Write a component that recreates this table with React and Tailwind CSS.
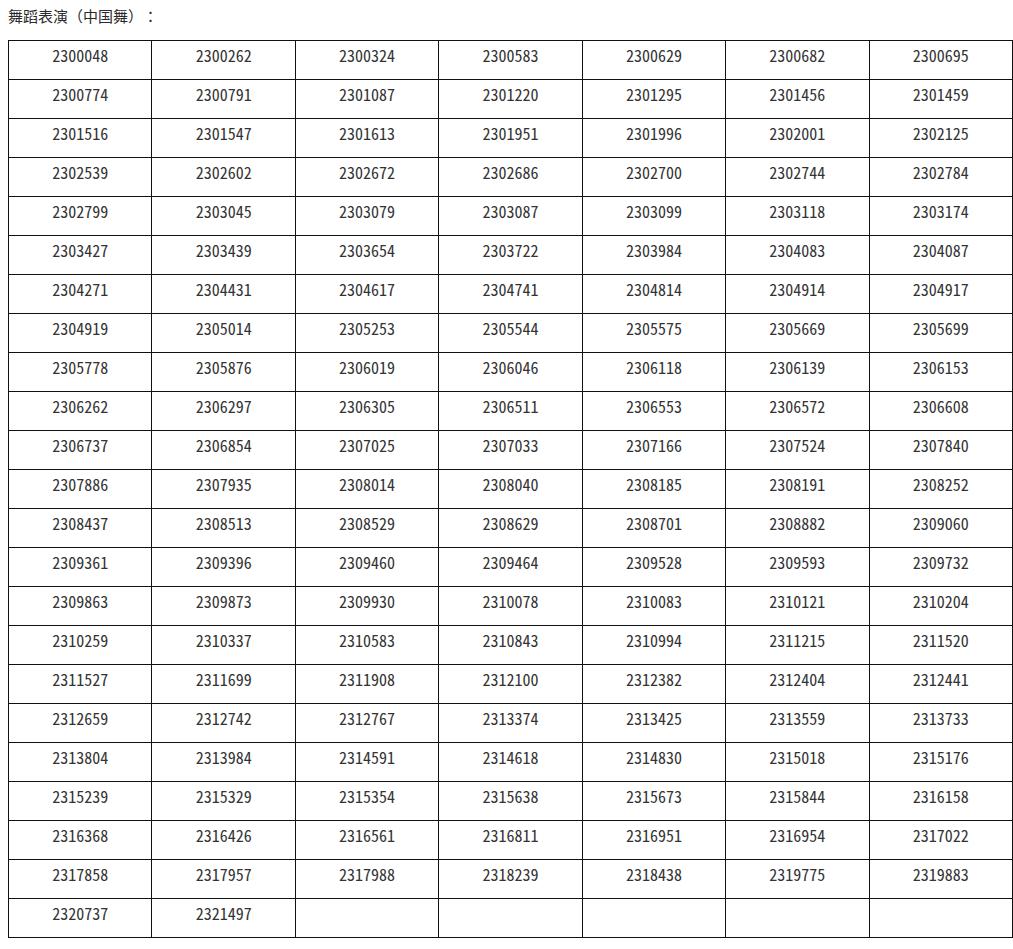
const data = `2300048 2300262 2300324 2300583 2300629 2300682 2300695
2300774 2300791 2301087 2301220 2301295 2301456 2301459
2301516 2301547 2301613 2301951 2301996 2302001 2302125
2302539 2302602 2302672 2302686 2302700 2302744 2302784
2302799 2303045 2303079 2303087 2303099 2303118 2303174
2303427 2303439 2303654 2303722 2303984 2304083 2304087
2304271 2304431 2304617 2304741 2304814 2304914 2304917
2304919 2305014 2305253 2305544 2305575 2305669 2305699
2305778 2305876 2306019 2306046 2306118 2306139 2306153
2306262 2306297 2306305 2306511 2306553 2306572 2306608
2306737 2306854 2307025 2307033 2307166 2307524 2307840
2307886 2307935 2308014 2308040 2308185 2308191 2308252
2308437 2308513 2308529 2308629 2308701 2308882 2309060
2309361 2309396 2309460 2309464 2309528 2309593 2309732
2309863 2309873 2309930 2310078 2310083 2310121 2310204
2310259 2310337 2310583 2310843 2310994 2311215 2311520
2311527 2311699 2311908 2312100 2312382 2312404 2312441
2312659 2312742 2312767 2313374 2313425 2313559 2313733
2313804 2313984 2314591 2314618 2314830 2315018 2315176
2315239 2315329 2315354 2315638 2315673 2315844 2316158
2316368 2316426 2316561 2316811 2316951 2316954 2317022
2317858 2317957 2317988 2318239 2318438 2319775 2319883
2320737 2321497`.split(/\s+/);

const cells = [...data];
while (cells.length < 161) cells.push("");

export default function App() {
  return (
    <div className="bg-white w-[1013px] h-[949px]">
      <div className="h-[40px] pl-[8px] pt-[5px] text-[15px] leading-[22px] text-[#2a2a2a] font-['Noto_Sans_CJK_TC','Noto_Sans_CJK_SC',sans-serif] [text-spacing-trim:space-all]">
        舞蹈表演（中国舞）：
      </div>
      <div className="ml-[8px] w-[1005px] grid grid-cols-7 border-l border-t border-[#111]">
        {cells.map((c, i) => (
          <div
            key={i}
            className="h-[39px] border-r border-b border-[#111] flex justify-center pt-[4px] text-[16px] leading-[20px] font-light text-[#333] font-['Noto_Sans_Mono_CJK_SC','Liberation_Mono',monospace]"
          >
            {c}
          </div>
        ))}
      </div>
    </div>
  );
}
